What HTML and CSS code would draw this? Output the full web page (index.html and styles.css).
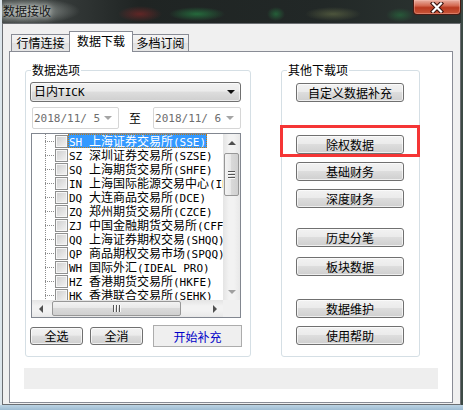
FILE: index.html
```html
<!DOCTYPE html>
<html>
<head>
<meta charset="utf-8">
<link rel="stylesheet" href="styles.css">
</head>
<body>
<div class="win">
  <div class="titlebar">
    <span class="title">数据接收</span>
    <div class="close">
      <svg width="14" height="11" viewBox="0 0 14 11">
        <path d="M3 1.5 L11 9.5 M11 1.5 L3 9.5" stroke="#3b1510" stroke-width="4.4" stroke-linecap="square" fill="none"/>
        <path d="M3 1.5 L11 9.5 M11 1.5 L3 9.5" stroke="#ffffff" stroke-width="2.2" stroke-linecap="square" fill="none"/>
      </svg>
    </div>
  </div>
  <div class="client">
    <div class="tabs">
      <div class="tab t1">行情连接</div>
      <div class="tab sel">数据下载</div>
      <div class="tab t3">多档订阅</div>
    </div>
    <div class="panel">
      <div class="groups">
        <div class="group left">
          <div class="legend">数据选项</div>
          <div class="combo"><span>日内<span class="m">TICK</span></span><i class="carr"></i></div>
          <div class="dates">
            <div class="date"><span class="m">2018/11/ 5</span><i class="darr"></i></div>
            <span class="to">至</span>
            <div class="date d2"><span class="m">2018/11/ 6</span><i class="darr"></i></div>
          </div>
          <div class="tree">
            <div class="rows">
              <div class="row on"><i class="br"></i><i class="cb"></i><span class="lb"><span class="m">SH </span>上海证券交易所<span class="m">(SSE)</span></span></div>
              <div class="row"><i class="br"></i><i class="cb"></i><span class="lb"><span class="m">SZ </span>深圳证券交易所<span class="m">(SZSE)</span></span></div>
              <div class="row"><i class="br"></i><i class="cb"></i><span class="lb"><span class="m">SQ </span>上海期货交易所<span class="m">(SHFE)</span></span></div>
              <div class="row"><i class="br"></i><i class="cb"></i><span class="lb"><span class="m">IN </span>上海国际能源交易中心<span class="m">(INE)</span></span></div>
              <div class="row"><i class="br"></i><i class="cb"></i><span class="lb"><span class="m">DQ </span>大连商品交易所<span class="m">(DCE)</span></span></div>
              <div class="row"><i class="br"></i><i class="cb"></i><span class="lb"><span class="m">ZQ </span>郑州期货交易所<span class="m">(CZCE)</span></span></div>
              <div class="row"><i class="br"></i><i class="cb"></i><span class="lb"><span class="m">ZJ </span>中国金融期货交易所<span class="m">(CFFEX)</span></span></div>
              <div class="row"><i class="br"></i><i class="cb"></i><span class="lb"><span class="m">QQ </span>上海证券期权交易<span class="m">(SHQQ)</span></span></div>
              <div class="row"><i class="br"></i><i class="cb"></i><span class="lb"><span class="m">QP </span>商品期权交易市场<span class="m">(SPQQ)</span></span></div>
              <div class="row"><i class="br"></i><i class="cb"></i><span class="lb"><span class="m">WH </span>国际外汇<span class="m">(IDEAL PRO)</span></span></div>
              <div class="row"><i class="br"></i><i class="cb"></i><span class="lb"><span class="m">HZ </span>香港期货交易所<span class="m">(HKFE)</span></span></div>
              <div class="row"><i class="br"></i><i class="cb"></i><span class="lb"><span class="m">HK </span>香港联合交易所<span class="m">(SEHK)</span></span></div>
            </div>
            <div class="vs">
              <div class="ar up"></div>
              <div class="vthumb"></div>
              <div class="vspace"></div>
              <div class="ar dn"></div>
            </div>
            <div class="hs">
              <div class="ar lf"></div>
              <div class="hthumb"></div>
              <div class="hspace"></div>
              <div class="ar rt"></div>
            </div>
            <div class="corner"></div>
          </div>
          <div class="actions">
            <div class="btn sm">全选</div>
            <div class="btn sm b2">全消</div>
            <div class="start">开始补充</div>
          </div>
        </div>
        <div class="group right">
          <div class="legend">其他下载项</div>
          <div class="btn rb r1">自定义数据补充</div>
          <div class="btn rb r2 hl">除权数据</div>
          <div class="btn rb r3">基础财务</div>
          <div class="btn rb r3">深度财务</div>
          <div class="btn rb r5">历史分笔</div>
          <div class="btn rb r6">板块数据</div>
          <div class="btn rb r7">数据维护</div>
          <div class="btn rb r3">使用帮助</div>
        </div>
      </div>
      <div class="status"></div>
    </div>
  </div>
</div>
</body>
</html>
```
FILE: styles.css
```css
* { box-sizing: border-box; }
html, body { margin: 0; padding: 0; }
body {
  width: 463px;
  height: 410px;
  overflow: hidden;
  font-family: "Noto Sans CJK SC", sans-serif;
  font-size: 12px;
  color: #000;
}
i { display: block; font-style: normal; }

.win {
  width: 463px;
  height: 410px;
  display: flex;
  flex-direction: column;
  background:
    linear-gradient(to top, #9fbdd3 0, #bcd3e3 5px, transparent 5px),
    linear-gradient(to right, #dde6ec 0 2px, transparent 2px calc(100% - 2px), #3c4a45 calc(100% - 2px)),
    radial-gradient(ellipse 50px 13px at 30px 11px, rgba(175,182,178,.8), rgba(175,182,178,0)),
    radial-gradient(ellipse 22px 8px at 140px 14px, rgba(150,40,40,.55), rgba(150,40,40,0)),
    radial-gradient(ellipse 28px 7px at 197px 14px, rgba(40,150,75,.6), rgba(40,150,75,0)),
    radial-gradient(ellipse 9px 7px at 276px 14px, rgba(40,150,75,.5), rgba(40,150,75,0)),
    radial-gradient(ellipse 28px 7px at 333px 14px, rgba(140,150,90,.4), rgba(140,150,90,0)),
    radial-gradient(ellipse 14px 7px at 400px 15px, rgba(40,150,75,.4), rgba(40,150,75,0)),
    linear-gradient(to right, #474c4b, #1f2423 30%, #222827 70%, #2c3532);
}

.titlebar {
  height: 23px;
  flex: none;
  display: flex;
  justify-content: space-between;
  align-items: flex-start;
  padding-left: 3px;
}
.title {
  margin-top: 3px;
  line-height: 16px;
  color: #151515;
  text-shadow: 0 0 5px rgba(225,228,225,.9), 0 0 9px rgba(225,228,225,.7);
}
.close {
  width: 48px;
  height: 15px;
  margin-right: 2px;
  border: 1px solid #4a1a12;
  border-top: 0;
  border-radius: 0 0 4px 4px;
  background: linear-gradient(#e9b0a2, #d46a52 40%, #b9391f 55%, #c9573a);
  box-shadow: inset 0 0 0 1px rgba(255,200,190,.35);
  display: flex;
  align-items: center;
  justify-content: center;
}

.client {
  flex: 1;
  margin: 0 2px 5px 2px;
  border: 1px solid #6b6e72;
  background: #f0f0f0;
  display: flex;
  flex-direction: column;
}

.tabs {
  flex: none;
  height: 27px;
  padding: 7px 0 0 8px;
  display: flex;
  align-items: flex-end;
}
.tab {
  height: 17px;
  border: 1px solid #898c95;
  border-bottom: 0;
  background: linear-gradient(#f4f4f4, #ececec 50%, #e0e0e0 50%, #e6e6e6);
  line-height: 16px;
  text-align: center;
}
.t1 { width: 58px; border-right: 0; }
.t3 { width: 56px; border-left: 0; }
.sel {
  width: 64px;
  height: 21px;
  margin-bottom: -1px;
  background: #fff;
  line-height: 17px;
  position: relative;
  z-index: 2;
}

.panel {
  flex: 1;
  margin: 0 7px 1px 6px;
  border: 1px solid #898c95;
  background: #fff;
}

.groups {
  display: flex;
  gap: 30px;
  margin: 18px 0 0 15px;
  height: 287px;
}
.group {
  border: 1px solid #d5dfe5;
  border-radius: 3px;
  display: flex;
  flex-direction: column;
  align-items: flex-start;
}
.group.left { width: 226px; }
.group.right { width: 139px; }
.legend {
  margin: -9px 0 0 5px;
  padding: 0 1px;
  height: 16px;
  line-height: 16px;
  background: #fff;
}

.m { font-family: "DejaVu Sans Mono", monospace; font-size: 11px; }

.btn {
  border: 1px solid #707070;
  border-radius: 3px;
  background: linear-gradient(#f2f2f2 0, #ebebeb 45%, #dddddd 50%, #cfcfcf 100%);
  box-shadow: inset 0 0 0 1px rgba(255,255,255,.65);
  display: flex;
  align-items: center;
  justify-content: center;
  line-height: 14px;
}

.combo {
  margin: 4px 0 0 4px;
  width: 211px;
  height: 20px;
  border: 1px solid #707070;
  border-radius: 3px;
  background: linear-gradient(#f2f2f2 0, #ebebeb 45%, #dddddd 50%, #cfcfcf 100%);
  box-shadow: inset 0 0 0 1px rgba(255,255,255,.6);
  display: flex;
  align-items: center;
  justify-content: space-between;
  padding: 0 5px 0 3px;
  line-height: 16px;
}
.carr {
  width: 0; height: 0;
  border-left: 4px solid transparent;
  border-right: 4px solid transparent;
  border-top: 4px solid #111;
}

.dates {
  display: flex;
  align-items: center;
  margin: 5px 0 0 6px;
  height: 22px;
}
.date {
  width: 87px;
  height: 22px;
  border: 1px solid #d6d6d6;
  border-radius: 2px;
  background: #fff;
  color: #6d6d6d;
  display: flex;
  align-items: center;
  justify-content: space-between;
  padding: 0 6px 0 1px;
}
.date.d2 { width: 88px; }
.darr {
  width: 0; height: 0;
  border-left: 4px solid transparent;
  border-right: 4px solid transparent;
  border-top: 4px solid #a5a5a5;
}
.to { margin: 0 12px 0 10px; line-height: 16px; }

.tree {
  margin: 4px 0 0 5px;
  width: 210px;
  height: 185px;
  border: 1px solid #828790;
  background: #fff;
  display: grid;
  grid-template-columns: 1fr 17px;
  grid-template-rows: 1fr 17px;
}
.rows {
  overflow: hidden;
  padding-left: 13px;
}
.row {
  display: flex;
  align-items: center;
  height: 14px;
  white-space: nowrap;
}
.br {
  flex: none;
  width: 10px;
  height: 14px;
  background:
    repeating-linear-gradient(to right, #8c8c8c 0 1px, transparent 1px 2px) 0 7px / 10px 1px no-repeat,
    repeating-linear-gradient(to bottom, #8c8c8c 0 1px, transparent 1px 2px) 0 0 / 1px 14px no-repeat;
}
.cb {
  flex: none;
  width: 13px;
  height: 13px;
  border: 1px solid #8e8f8f;
  background: linear-gradient(135deg, #cdcdcd, #f4f4f4);
  box-shadow: inset 0 0 0 1px #f6f6f6;
}
.lb {
  padding: 0 1px;
  height: 14px;
  line-height: 14px;
}
.row.on .lb {
  background: #3399ff;
  color: #fff;
  outline: 1px dotted #c27a10;
  outline-offset: -1px;
}

.vs {
  display: flex;
  flex-direction: column;
  background: linear-gradient(to right, #e4e4e4, #f2f2f2 35%, #f2f2f2 65%, #e8e8e8);
}
.hs {
  display: flex;
  background: linear-gradient(to bottom, #e4e4e4, #f2f2f2 35%, #f2f2f2 65%, #e8e8e8);
}
.corner { background: #f0f0f0; }
.ar {
  flex: none;
  width: 17px;
  height: 17px;
  display: flex;
  align-items: center;
  justify-content: center;
}
.ar::before { content: ""; width: 0; height: 0; }
.ar.up::before { border-left: 4px solid transparent; border-right: 4px solid transparent; border-bottom: 4px solid #505050; }
.ar.dn::before { border-left: 4px solid transparent; border-right: 4px solid transparent; border-top: 4px solid #a0a0a0; }
.ar.lf::before { border-top: 4px solid transparent; border-bottom: 4px solid transparent; border-right: 4px solid #505050; }
.ar.rt::before { border-top: 4px solid transparent; border-bottom: 4px solid transparent; border-left: 4px solid #505050; }
.vthumb {
  flex: none;
  margin: 2px 1px 0 1px;
  height: 43px;
  border: 1px solid #979797;
  border-radius: 2px;
  background: linear-gradient(to right, #f3f3f3, #e8e8e8 45%, #d9d9d9 50%, #d0d0d0);
  display: flex;
  align-items: center;
  justify-content: center;
}
.vthumb::before {
  content: "";
  width: 7px;
  height: 8px;
  background: repeating-linear-gradient(to bottom, #555 0 1px, #fafafa 1px 2px, transparent 2px 3px);
}
.vspace, .hspace { flex: 1; }
.hthumb {
  flex: none;
  margin: 1px 0 1px 3px;
  width: 129px;
  border: 1px solid #979797;
  border-radius: 2px;
  background: linear-gradient(to bottom, #f3f3f3, #e8e8e8 45%, #d9d9d9 50%, #d0d0d0);
  display: flex;
  align-items: center;
  justify-content: center;
}
.hthumb::before {
  content: "";
  width: 8px;
  height: 7px;
  background: repeating-linear-gradient(to right, #555 0 1px, #fafafa 1px 2px, transparent 2px 3px);
}

.actions {
  display: flex;
  align-items: center;
  margin: 7px 0 0 4px;
  height: 22px;
}
.sm { width: 53px; height: 18px; }
.b2 { margin-left: 7px; }
.start {
  margin-left: 10px;
  width: 89px;
  height: 22px;
  border: 1px solid #acacac;
  background: #efefef;
  color: #0000c8;
  display: flex;
  align-items: center;
  justify-content: center;
}

.rb { width: 108px; height: 19px; margin-left: 14px; }
.r1 { margin-top: 5px; }
.r2 { margin-top: 33px; }
.r3 { margin-top: 8px; }
.r5 { margin-top: 20px; }
.r6 { margin-top: 10px; }
.r7 { margin-top: 23px; }
.hl { position: relative; }
.hl::after {
  content: "";
  position: absolute;
  left: -17px;
  right: -17px;
  top: -11px;
  bottom: -4px;
  border: 3px solid #f53535;
}

.status {
  margin: 11px 0 0 14px;
  width: 414px;
  height: 21px;
  background: #eeeeee;
}
```
